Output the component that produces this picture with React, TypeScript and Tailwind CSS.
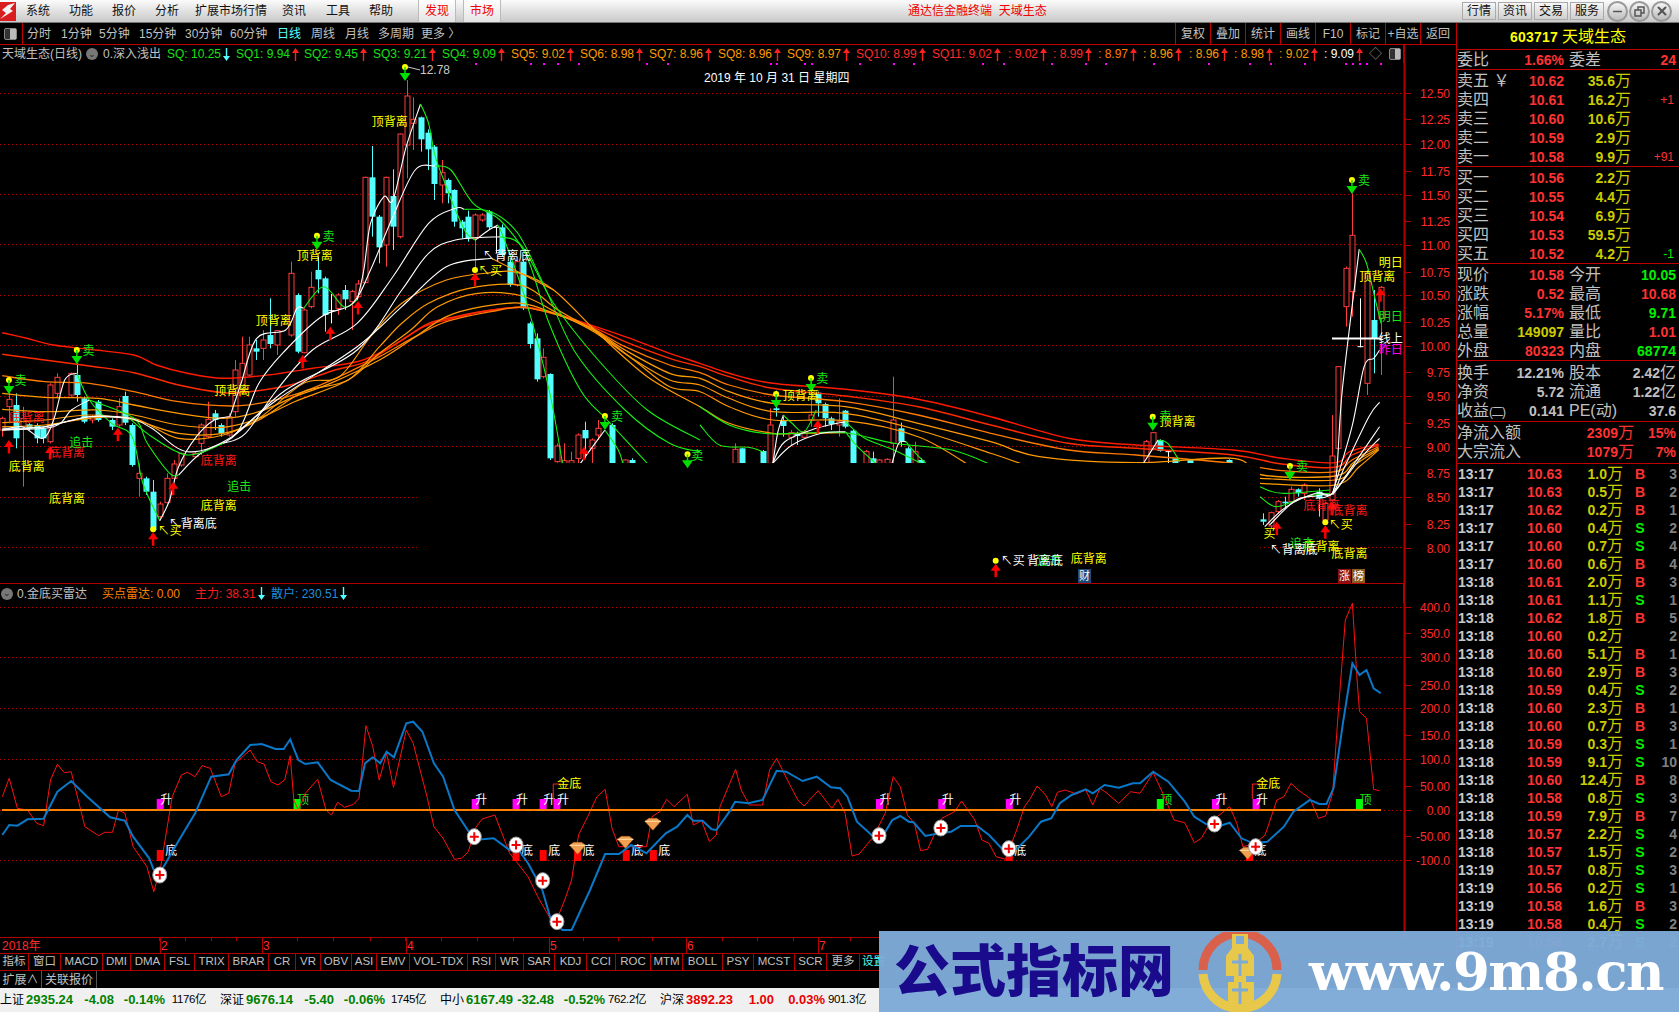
import { Minus, X } from "lucide-react";

// reference crops were read in their own scale, these turn crop numbers into page pixels
const z8 = (p: number[]) => conv(p, 0, 90, 2.24);
const z9 = (p: number[]) => conv(p, 700, 150, 2.063);
const z10 = (p: number[]) => conv(p, 0, 580, 2.178);
const z11 = (p: number[]) => conv(p, 720, 580, 2.119);

function conv(p: number[], ox: number, oy: number, sx: number) {
  const out: [number, number][] = [];
  for (let i = 0; i < p.length; i += 2) out.push([ox + p[i] / sx, oy + p[i + 1] / 3]);
  return out;
}

function smooth(pts: [number, number][]) {
  let d = `M${pts[0][0].toFixed(1)} ${pts[0][1].toFixed(1)}`;
  for (let i = 0; i < pts.length - 1; i++) {
    const p0 = pts[i - 1] || pts[i];
    const p1 = pts[i];
    const p2 = pts[i + 1];
    const p3 = pts[i + 2] || p2;
    const c1x = p1[0] + (p2[0] - p0[0]) / 6;
    const c1y = p1[1] + (p2[1] - p0[1]) / 6;
    const c2x = p2[0] - (p3[0] - p1[0]) / 6;
    const c2y = p2[1] - (p3[1] - p1[1]) / 6;
    d += `C${c1x.toFixed(1)} ${c1y.toFixed(1)} ${c2x.toFixed(1)} ${c2y.toFixed(1)} ${p2[0].toFixed(1)} ${p2[1].toFixed(1)}`;
  }
  return d;
}

const RED = "#ff2a2a";
const ORANGE = "#ff9a00";
const GREEN = "#16f016";
const WHITE = "#ffffff";

// ribbon of moving averages, slow to fast
const ribbon: { c: string; w?: number; pts: [number, number][] }[] = [
  { c: "#ff1a00", w: 1.4, pts: [...z8([5,728,60,745,120,765,200,778,300,795,350,825,420,850,500,865,600,855,700,835,800,815,870,775,950,710,1000,690,1080,665,1170,652,1230,665,1300,695,1400,740,1500,790]), ...z9([0,640,60,670,150,700,300,718,450,748,600,800,760,865,900,885,1100,900,1200,925,1310,938,1340,905,1400,882])] },
  { c: "#ff2a00", w: 1.4, pts: [...z8([5,793,100,810,200,828,300,848,400,885,500,908,560,905,650,885,750,840,820,815,900,750,960,700,1020,680,1100,660,1170,652,1240,670,1310,700,1400,755,1500,805]), ...z9([0,650,60,680,150,715,300,738,450,770,600,825,760,880,900,895,1100,915,1200,942,1310,952,1345,915,1400,885])] },
  { c: "#ff7a00", w: 1.3, pts: [...z8([5,857,100,875,200,880,300,905,400,935,520,948,600,935,680,905,760,860,850,800,930,740,1000,695,1100,665,1170,652,1250,675,1320,710,1400,770,1500,825]), ...z9([0,668,60,705,150,735,300,755,450,795,600,850,760,900,900,915,1100,940,1200,962,1310,965,1345,930,1400,890])] },
  { c: ORANGE, w: 1.3, pts: [...z8([5,910,100,922,220,925,300,945,400,970,500,985,580,965,660,920,740,880,850,810,920,750,1000,680,1080,650,1170,640,1250,675,1330,720,1400,780,1500,850]), ...z9([0,685,60,725,150,760,300,770,450,820,600,875,700,920,900,938,1100,925,1160,975,1310,978,1350,935,1400,895])] },
  { c: ORANGE, w: 1.2, pts: [...z8([5,958,100,965,220,960,300,975,400,1005,500,1012,580,985,660,935,780,870,850,790,920,720,980,650,1070,610,1170,618,1250,670,1330,725,1410,800,1500,870]), ...z9([0,705,60,745,150,785,300,790,450,840,600,910,680,950])] },
  { c: ORANGE, w: 1.2, pts: [...z8([5,998,100,990,200,975,300,990,400,1030,500,1030,580,990,680,905,780,870,850,770,900,700,960,640,1050,595,1170,587,1250,660,1340,730,1420,810,1500,890]), ...z9([0,725,60,770,150,810,300,812,450,860,560,950])] },
  { c: ORANGE, w: 1.2, pts: [...z8([5,1010,100,1005,200,985,300,985,400,1045,500,1035,580,985,680,880,760,860,830,740,900,640,1000,570,1100,548,1160,548,1240,600,1340,730,1450,860,1568,950]), ...z9([60,820,150,850,200,850,300,848])] },
  { c: ORANGE, w: 1.2, pts: z9([1155,985,1310,990,1350,945,1400,898]) },
  { c: ORANGE, w: 1.2, pts: z9([1155,1000,1310,1005,1360,950,1400,900]) },
  // green / white stretches of the faster averages
  { c: WHITE, pts: z8([5,1020,50,1010,95,1045,120,990,145,870,172,850]) },
  { c: GREEN, pts: z8([172,850,200,930,250,1000,296,1040,320,1180,358,1292]) },
  { c: WHITE, pts: z8([358,1292,380,1230,400,1130,440,1040,480,990,515,980]) },
  { c: WHITE, pts: z8([515,980,540,880,575,745,640,720,665,655,680,655]) },
  { c: GREEN, pts: z8([680,655,725,590,770,650,800,630]) },
  { c: WHITE, pts: z8([800,630,815,540,830,400,860,320,880,330,910,170,942,42]) },
  { c: GREEN, pts: z8([942,42,960,100,975,200,1000,290,1020,360,1045,430,1065,450]) },
  { c: WHITE, pts: z8([1065,450,1095,420,1115,405]) },
  { c: GREEN, pts: z8([1115,405,1130,450,1180,640,1230,900,1260,1120]) },
  { c: WHITE, pts: z8([1300,1120,1355,1020]) },
  { c: GREEN, pts: z8([1355,1020,1385,1080,1395,1120]) },
  { c: WHITE, pts: z8([5,1020,120,1010,160,960,200,930]) },
  { c: GREEN, pts: z8([200,930,300,985,330,1060,380,1150,400,1155]) },
  { c: WHITE, pts: z8([400,1155,450,1090,530,1030,580,880,640,780,720,680,790,640,830,540,880,380,930,240,975,228]) },
  { c: GREEN, pts: z8([975,228,1010,240,1060,340,1120,390,1180,500,1230,700,1300,900,1360,990,1450,1120]) },
  { c: WHITE, pts: z8([5,1015,100,1010,200,980,290,985]) },
  { c: GREEN, pts: z8([290,985,340,1040,420,1095,500,1060]) },
  { c: WHITE, pts: z8([500,1060,550,1030,620,900,700,780,800,700,880,560,960,400,1020,355,1040,358]) },
  { c: GREEN, pts: z8([1040,358,1100,365,1160,430,1220,590,1290,790,1400,960,1500,1060,1568,1085]) },
  { c: WHITE, pts: z8([5,1020,100,1010,200,980,290,985,340,1015,420,1085,520,1040,640,900,800,780,900,600,960,490,1020,450,1120,440]) },
  { c: GREEN, pts: [...z8([1120,440,1170,470,1240,640,1340,810,1450,960,1568,1050])] },
  { c: WHITE, pts: z8([520,1040,620,930,800,770,900,650,1000,530,1100,505]) },
  { c: ORANGE, pts: z8([1100,505,1160,545,1240,600]) },
  { c: GREEN, pts: z9([0,770,60,825,130,850,200,850,300,848,400,880,520,900,610,950]) },
  { c: GREEN, pts: z9([0,825,40,885,100,892,130,905]) },
  { c: WHITE, pts: z9([150,945,160,850,172,795]) },
  { c: GREEN, pts: z9([172,795,190,820,215,845,240,780]) },
  { c: WHITE, pts: z9([150,940,190,885,250,850,300,845]) },
  { c: WHITE, pts: z9([150,940,175,875,240,835,300,815]) },
  { c: GREEN, pts: z9([300,845,325,890,370,950]) },
  { c: GREEN, pts: z9([300,815,340,865,400,900,470,950]) },
  { c: WHITE, pts: z9([395,945,410,880,425,875]) },
  { c: GREEN, pts: z9([425,875,445,910,470,945]) },
  { c: WHITE, pts: z9([915,940,945,870]) },
  { c: GREEN, pts: z9([945,870,965,880,990,935]) },
  { c: GREEN, pts: z9([1155,1010,1200,1030,1300,1020]) },
  { c: GREEN, pts: z9([1155,1040,1190,1070,1250,1040,1300,1030]) },
  { c: WHITE, pts: z9([1165,1130,1210,1070,1270,1030,1305,1030,1330,950,1380,800,1402,757]) },
  { c: WHITE, pts: z9([1270,1045,1305,1030,1350,940,1402,830]) },
  { c: WHITE, pts: z9([1305,1035,1360,930,1402,865]) },
  { c: WHITE, pts: z9([1175,1125,1230,1050,1280,1035,1310,1005,1325,720,1360,298]) },
  { c: GREEN, pts: z9([1360,298,1375,340,1390,430,1405,520]) },
  { c: WHITE, pts: z9([1305,1030,1345,830,1370,650,1390,625,1402,600]) },
];

// x, high, body top, body bottom, low, kind: 0 red hollow, 1 cyan filled, 2 white doji
type Candle = [number, number, number, number, number, number];
const candles8: Candle[] = [
  [5,980,985,1020,1040,0],[20,905,928,950,1000,0],[36,910,945,1045,1075,1],[51,950,985,1010,1190,0],[66,1000,1003,1015,1020,1],[82,1000,1005,1045,1060,1],[97,1010,1015,1045,1060,1],
  [113,880,885,1055,1060,0],[128,850,862,910,925,0],[158,848,850,915,920,0],[173,820,855,915,935,1],[189,920,925,995,1000,1],[205,975,980,990,1000,0],[220,930,935,990,995,1],[251,985,990,1010,1020,1],
  [266,925,950,1005,1010,0],[281,905,918,998,1005,1],[296,1000,1005,1125,1130,1],[312,1120,1150,1165,1220,0],[328,1160,1165,1205,1215,1],[343,1170,1205,1320,1325,1],[359,1235,1242,1280,1285,0],
  [374,1150,1165,1238,1240,0],[389,1110,1122,1165,1170,0],[405,1088,1090,1125,1130,0],[436,1085,1090,1100,1105,0],[451,1000,1005,1060,1095,0],[466,935,988,1040,1045,0],[481,960,970,990,1020,1],
  [496,1000,1005,1030,1040,1],[512,970,980,1035,1040,0],[527,810,840,965,980,0],[543,740,820,900,905,0],[558,740,765,855,860,0],[574,750,775,785,810,1],[589,720,750,775,810,0],[604,625,735,762,775,1],
  [620,720,722,765,795,0],[651,515,550,735,740,0],[667,610,615,785,790,1],[680,655,660,788,790,0],[696,545,592,650,655,0],[712,500,540,568,610,1],[727,560,565,675,725,1],[742,612,662,664,700,2],[758,610,615,655,675,0],
  [773,585,600,628,660,1],[788,600,605,635,720,0],[803,570,582,620,625,0],[818,260,262,578,580,0],[834,168,262,380,440,1],[850,375,380,472,520,1],[865,260,262,465,530,0],[881,238,318,410,480,1],
  [895,130,132,440,445,0],[911,-30,18,165,265,0],[926,22,88,100,180,0],[942,80,82,148,185,1],[958,118,128,178,240,1],[973,165,170,282,330,1],[989,210,248,285,340,0],[1003,265,270,310,340,1],
  [1018,298,300,395,410,1],[1034,390,395,415,445,1],[1049,362,380,445,455,1],[1065,370,375,445,540,0],[1080,370,375,390,395,0],[1096,360,365,412,420,1],[1111,410,412,420,490,2],[1125,403,412,495,500,1],
  [1142,510,515,585,590,1],[1157,510,515,585,590,0],[1172,510,515,655,660,1],[1188,695,700,762,775,1],[1203,730,745,868,875,1],[1217,775,802,860,865,0],[1233,850,852,1105,1110,1],[1248,1060,1068,1115,1118,0],
  [1264,1060,1112,1120,1120,0],[1280,1085,1112,1120,1120,0],[1295,1030,1035,1105,1120,0],[1310,995,1020,1045,1105,1],[1325,1045,1050,1075,1120,0],[1340,990,1015,1035,1050,0],[1371,1000,1005,1120,1120,1],[1400,1108,1110,1120,1120,0],[1416,1105,1110,1120,1120,1],
];
const candles9: Candle[] = [
  [72,880,898,940,940,0],[87,893,895,940,940,1],[131,900,903,940,940,1],[145,775,825,940,940,0],[157,722,775,780,800,1],[172,800,810,828,860,1],[187,840,848,862,885,0],[200,845,850,858,885,1],[215,840,845,862,865,0],
  [230,690,795,810,830,0],[243,725,728,760,800,1],[257,758,762,805,830,1],[271,800,805,822,840,1],[286,745,815,825,860,0],[299,780,782,830,835,1],[315,840,842,940,940,1],[343,900,905,940,940,0],[356,905,925,940,940,1],
  [370,928,930,940,940,0],[385,925,928,940,940,0],[399,680,810,880,940,0],[414,818,835,875,890,1],[429,890,895,940,940,1],[443,875,905,940,940,0],[455,925,930,940,940,1],[920,870,875,940,940,0],[935,846,848,895,900,0],
  [950,868,870,903,905,1],[965,900,905,940,940,2],[980,925,925,940,940,1],[1010,928,930,940,940,1],[1092,928,930,940,940,1],
  [1162,1090,1108,1115,1125,1],[1177,1085,1088,1128,1135,0],[1192,1050,1055,1085,1090,0],[1207,1040,1055,1060,1075,1],[1219,1010,1018,1055,1060,0],[1233,1015,1018,1030,1040,1],[1247,1000,1005,1030,1050,0],
  [1277,1015,1025,1045,1100,1],[1290,1055,1060,1110,1115,0],[1304,795,918,1050,1055,0],[1317,648,650,895,900,0],[1332,350,355,470,530,0],[1345,130,256,425,500,0],[1361,445,590,592,592,2],[1375,360,365,700,735,0],[1390,420,510,565,670,1],[1404,408,412,505,675,0],
];

const sells: [number, number][] = [
  ...z8([20,870,172,780,710,437,1355,978,1540,1093]),
  ...z9([157,732,229,684,934,800,1217,948,1345,90]),
  [405, 67],
];
const buys: [number, number, boolean][] = [
  ...z8([20,1050,112,1068,264,1013,388,1175,678,795,740,710,802,633,1308,1070]).map((p) => [p[0], p[1], false] as [number, number, boolean]),
  ...z8([343,1318,1064,540]).map((p) => [p[0], p[1], true] as [number, number, boolean]),
  ...z9([243,810,1190,1115,1303,1055,1404,415]).map((p) => [p[0], p[1], false] as [number, number, boolean]),
  ...z9([610,1232,1290,1117]).map((p) => [p[0], p[1], true] as [number, number, boolean]),
];

const YEL = "#ffff00";
const LBL = "#ff1a1a";
const LGR = "#19e619";
const labels: [string, [number, number], string][] = [
  ["顶背离", z8([873,95])[0], YEL], ["顶背离", z8([705,497])[0], YEL], ["顶背离", z8([613,690])[0], YEL], ["顶背离", z8([520,900])[0], YEL],
  ["底背离", z8([60,983])[0], LBL], ["底背离", z8([150,1087])[0], LBL], ["底背离", z8([490,1110])[0], LBL],
  ["底背离", z8([60,1128])[0], YEL], ["底背离", z8([150,1225])[0], YEL], ["底背离", z8([490,1245])[0], YEL],
  ["追击", z8([182,1057])[0], LGR], ["追击", z8([536,1188])[0], LGR],
  ["卖", z8([46,870])[0], LGR], ["卖", z8([198,780])[0], LGR], ["卖", z8([736,438])[0], LGR], ["卖", z8([1382,978])[0], LGR], ["卖", z8([1562,1095])[0], LGR],
  ["↖背离底", z8([432,1300])[0], WHITE], ["↖背离底", z8([1135,497])[0], WHITE],
  ["↖买", z8([380,1320])[0], YEL], ["↖买", z8([1098,540])[0], YEL],
  ["顶背离", z9([208,737])[0], YEL], ["顶背离", z9([985,815])[0], YEL], ["顶背离", z9([1397,380])[0], YEL],
  ["卖", z9([252,685])[0], LGR], ["卖", z9([1370,92])[0], LGR], ["卖", z9([960,798])[0], LGR], ["卖", z9([1242,948])[0], LGR],
  ["明日", z9([1425,338])[0], YEL], ["明日", z9([1425,500])[0], LGR], ["线上", z9([1425,565])[0], WHITE], ["昨日", z9([1425,597])[0], "#ff00ff"],
  ["底背离", z9([1282,1065])[0], LBL], ["底背离", z9([1340,1080])[0], LBL],
  ["底背离", z9([802,1225])[0], YEL], ["底背离", z9([1340,1210])[0], YEL], ["底背离", z9([1282,1190])[0], YEL],
  ["追击", z9([1242,1180])[0], LGR], ["追击", z9([720,1232])[0], LGR],
  ["买", z9([1175,1150])[0], YEL], ["↖买", z9([1322,1122])[0], YEL], ["↖买", z9([645,1232])[0], WHITE],
  ["↖背离底", z9([1225,1197])[0], WHITE], ["背离底", z9([712,1232])[0], WHITE],
];

const grid1 = [93, 144, 194, 244, 295, 345, 396, 446, 497, 547];
const axis1: [string, number][] = [["12.50",93],["12.25",119],["12.00",144],["11.75",171],["11.50",195],["11.25",221],["11.00",245],["10.75",272],["10.50",295],["10.25",322],["10.00",346],["9.75",372],["9.50",396],["9.25",423],["9.00",447],["8.75",473],["8.50",497],["8.25",524],["8.00",548]];
const grid2 = [607, 657, 708, 759, 810, 860];
const axis2: [string, number][] = [["400.0",607],["350.0",633],["300.0",657],["250.0",685],["200.0",708],["150.0",735],["100.0",759],["50.00",786],["0.00",810],["-50.00",836],["-100.0",860]];

const blue = [
  ...z10([5,765,20,735,38,737,60,718,95,716,125,635,155,603,190,650,240,712,272,722,290,770,325,835,335,870,350,875,390,780,425,700,460,590,498,583,515,540,545,495,570,492,600,507,618,507,632,478,650,540,665,552,692,547,720,600,765,632,782,633,795,550,812,532,828,550,842,515,858,532,885,430,900,425,920,455,945,550,965,590,990,690,1033,780,1075,775,1110,810,1125,800,1150,850,1180,925,1200,1020,1225,1050,1245,1050,1285,930,1318,822,1348,822,1375,795,1408,820,1450,760,1475,740,1497,705,1510,722,1530,722,1550,748,1560,750]),
  ...z11([0,735,20,695,32,665,60,670,90,660,120,572,140,575,175,603,205,590,235,622,255,625,270,650,290,725,325,770,340,780,365,720,382,708,400,725,410,727,435,768,465,760,490,755,510,738,545,738,570,765,610,825,630,805,655,770,680,725,702,715,720,670,745,645,775,628,790,640,815,615,845,623,875,610,890,610,918,575,950,605,985,665,1005,710,1030,732,1060,737,1080,728,1105,775,1130,790,1160,785,1195,740,1215,695,1250,660,1270,672,1285,672,1300,625,1320,430,1340,250,1355,285,1370,270,1385,325,1400,340]),
];
const thinRed = [
  ...z10([5,650,20,595,38,685,60,690,80,730,95,737,110,600,125,553,140,578,155,575,185,740,215,767,228,757,245,757,258,690,272,700,290,800,320,860,335,935,350,860,375,650,395,585,408,577,425,590,440,557,458,565,482,650,498,640,512,550,545,510,560,545,575,552,590,605,605,615,620,600,632,527,640,660,650,690,665,640,692,598,710,690,722,705,735,667,750,682,770,673,782,655,797,437,812,500,826,600,842,520,857,622,885,450,900,490,930,650,945,740,965,775,990,838,1005,835,1020,815,1035,745,1050,717,1078,705,1110,820,1125,845,1150,890,1172,952,1200,1020,1215,1010,1230,960,1245,900,1260,765,1280,710,1300,650,1318,628,1333,745,1348,800,1385,800,1408,800,1420,710,1437,695,1452,658,1468,680,1497,643,1510,735,1528,722,1545,785,1560,765]),
  ...z11([0,680,33,568,45,630,62,675,90,675,105,570,120,535,150,620,165,660,178,678,208,632,237,685,250,658,265,700,280,828,295,822,325,770,350,700,367,590,382,620,397,705,412,730,425,812,440,808,470,715,497,695,512,663,540,720,555,780,570,790,585,830,605,838,630,745,645,680,658,655,672,618,690,645,703,680,715,637,732,630,755,642,775,630,790,675,805,625,820,640,845,670,870,635,890,640,918,578,940,645,962,720,985,728,1005,788,1020,775,1040,725,1080,680,1095,730,1108,800,1135,790,1155,765,1180,660,1195,650,1210,610,1225,630,1250,655,1268,715,1283,708,1298,640,1310,400,1325,120,1340,70,1350,300,1355,395,1370,415,1385,628,1397,632]),
];

const riseX = [...z10([349,0,1035,0,1124,0,1183,0,1213,0]), ...z11([338,0,470,0,613,0,1050,0,1136,0])].map((p) => p[0]);
const topX = [...z10([647,0]), ...z11([933,0,1355,0])].map((p) => p[0]);
const bottomX = [...z10([349,0,1124,0,1183,0,1258,0,1364,0,1423,0]), ...z11([613,0,1122,0])].map((p) => p[0]);
const crosses = [...z10([348,885,1033,770,1124,795,1182,902,1213,1025]), ...z11([337,767,468,744,612,806,1048,732,1135,800])];
const gems = [...z10([1258,805,1362,787,1422,733]), ...z11([1118,820])];
const goldX = [...z10([1205,0]), ...z11([1128,0])].map((p) => p[0]);

const magentaDots = [475,530,543,557,578,646,667,770,776,804,811,859,893,913,982,1003,1051,1085,1105,1153,1208,1249,1270,1304,1345,1352,1359,1366,1380];

function Arrow({ up, color }: { up: boolean; color: string }) {
  return (
    <svg width="7" height="13" viewBox="0 0 7 13" className="shrink-0">
      {up ? <path d="M3.5 0L7 5H4.2V13H2.8V5H0Z" fill={color} /> : <path d="M3.5 13L7 8H4.2V0H2.8V8H0Z" fill={color} />}
    </svg>
  );
}

function TopChart() {
  const wick = { 0: "#ff3c3c", 1: "#54ffff", 2: "#ffffff" } as Record<number, string>;
  const drawCandle = (c: Candle, conv2: (p: number[]) => [number, number][], i: number) => {
    const [[x, hi], [, top], [, bot], [, lo]] = conv2([c[0], c[1], c[0], c[2], c[0], c[3], c[0], c[4]]);
    const cx = Math.round(x) + 0.5;
    const color = wick[c[5]];
    return (
      <g key={i}>
        <line x1={cx} x2={cx} y1={hi} y2={lo} stroke={color} />
        {c[5] === 0 && <rect x={cx - 2.5} y={top} width={5} height={bot - top} fill="#000" stroke={color} />}
        {c[5] === 1 && <rect x={cx - 3} y={top} width={6} height={bot - top} fill={color} />}
        {c[5] === 2 && <line x1={cx - 3} x2={cx + 3} y1={top} y2={top} stroke={color} />}
      </g>
    );
  };
  return (
    <svg width="1456" height="520" viewBox="0 63 1456 520" className="block">
      {grid1.map((y) => (
        <line key={y} x1="0" x2="1404" y1={y + 0.5} y2={y + 0.5} stroke="#c00000" strokeDasharray="1 3" />
      ))}
      {candles8.map((c, i) => drawCandle(c, z8, i))}
      {candles9.map((c, i) => drawCandle(c, z9, i + 500))}
      {ribbon.map((l, i) => (
        <path key={i} d={smooth(l.pts)} fill="none" stroke={l.c} strokeWidth={l.w || 1.1} />
      ))}
      {/* the black patch sitting over the lower middle of the chart */}
      <rect x="417" y="463" width="843" height="88" fill="#000" fillOpacity="0.96" />
      <line x1="1332" x2="1381" y1="338.5" y2="338.5" stroke="#fff" strokeWidth="2" />
      {sells.map(([x, y], i) => (
        <g key={i}>
          <circle cx={x} cy={y} r="3" fill="#ffff00" />
          <line x1={x} x2={x} y1={y} y2={y + 8} stroke="#00e000" strokeWidth="1.5" />
          <path d={`M${x - 5.5} ${y + 6}H${x + 5.5}L${x} ${y + 14}Z`} fill="#00e000" />
        </g>
      ))}
      {buys.map(([x, y, dot], i) => (
        <g key={i}>
          {dot && <circle cx={x} cy={y} r="3" fill="#ffff00" />}
          <path d={`M${x} ${y + (dot ? 2 : 0)}l5 7h-3.8v6.5h-2.4v-6.5h-3.8Z`} transform={`translate(0 ${dot ? 1 : 0})`} fill="#ff0000" />
        </g>
      ))}
      <text x="420" y="74" fontSize="12" fill="#c8c8c8">12.78</text>
      <path d="M408 67L420 70" stroke="#c8c8c8" />
      {labels.map(([t, [x, y], c], i) => (
        <text key={i} x={x} y={y + 4.5} fontSize="12" fill={c} textAnchor="middle">{t}</text>
      ))}
      <g fontSize="11" textAnchor="middle">
        <rect x="1078" y="569" width="13" height="14" fill="#1b4a7a" />
        <text x="1084.5" y="580" fill="#fff">财</text>
        <rect x="1338" y="569" width="13" height="14" fill="#8a1010" />
        <text x="1344.5" y="580" fill="#fff">涨</text>
        <rect x="1352" y="569" width="13" height="14" fill="#8a5a20" />
        <text x="1358.5" y="580" fill="#fff">榜</text>
      </g>
      {magentaDots.map((x) => (
        <rect key={x} x={x} y="63" width="2" height="2" fill="#ff00ff" />
      ))}
      <text x="704" y="82" fontSize="12" fill="#fff">2019 年 10 月 31 日 星期四</text>
      <line x1="1404.5" x2="1404.5" y1="63" y2="583" stroke="#b00000" strokeWidth="2" />
      {axis1.map(([t, y]) => (
        <g key={t}>
          <line x1="1405" x2="1411" y1={y + 0.5} y2={y + 0.5} stroke="#b00000" />
          <text x="1450" y={y + 4.5} fontSize="12" fill={RED} textAnchor="end">{t}</text>
        </g>
      ))}
    </svg>
  );
}

function BottomChart() {
  const pts = (l: [number, number][]) => l.map((p) => `${p[0].toFixed(1)},${p[1].toFixed(1)}`).join(" ");
  return (
    <svg width="1456" height="334" viewBox="0 603 1456 334" className="block">
      {grid2.map((y) => (
        <line key={y} x1="0" x2="1404" y1={y + 0.5} y2={y + 0.5} stroke="#c00000" strokeDasharray="1 3" />
      ))}
      {riseX.map((x) => (
        <g key={x}>
          <rect x={x - 3.5} y="799" width="7" height="11" fill="#ff00ff" />
          <text x={x + 6} y="804" fontSize="12" fill="#fff" textAnchor="middle">升</text>
        </g>
      ))}
      {topX.map((x) => (
        <g key={x}>
          <rect x={x - 3.5} y="799" width="7" height="11" fill="#00ff00" />
          <text x={x + 6} y="804" fontSize="12" fill="#19e619" textAnchor="middle">顶</text>
        </g>
      ))}
      {bottomX.map((x) => (
        <g key={x}>
          <rect x={x - 3.5} y="850" width="7" height="11" fill="#ff0000" />
          <text x={x + 11} y="855" fontSize="12" fill="#fff" textAnchor="middle">底</text>
        </g>
      ))}
      {goldX.map((x) => (
        <g key={x}>
          <path d={`M${x} 799V784H${x + 8}`} fill="none" stroke="#ff2020" />
          <text x={x + 16} y="788" fontSize="12" fill="#ffff00" textAnchor="middle">金底</text>
        </g>
      ))}
      <polyline points={pts(thinRed)} fill="none" stroke="#ff1010" />
      <line x1="2" x2="1381" y1="810" y2="810" stroke="#ff8000" strokeWidth="2" />
      <polyline points={pts(blue)} fill="none" stroke="#0a78c8" strokeWidth="2" />
      {gems.map(([x, y], i) => (
        <g key={i}>
          <path d={`M${x - 8} ${y - 3}L${x - 4} ${y - 6}H${x + 4}L${x + 8} ${y - 3}L${x} ${y + 6}Z`} fill="#f0a050" stroke="#b86018" strokeWidth="0.5" />
          <path d={`M${x - 8} ${y - 3}H${x + 8}`} stroke="#ffe0b0" />
        </g>
      ))}
      {crosses.map(([x, y], i) => (
        <g key={i}>
          <ellipse cx={x} cy={y} rx="7" ry="8" fill="#fff" stroke="#999" />
          <path d={`M${x - 4.5} ${y}H${x + 4.5}M${x} ${y - 4.5}V${y + 4.5}`} stroke="#f00000" strokeWidth="2" />
        </g>
      ))}
      <line x1="1404.5" x2="1404.5" y1="603" y2="937" stroke="#b00000" strokeWidth="2" />
      {axis2.map(([t, y]) => (
        <g key={t}>
          <line x1="1405" x2="1411" y1={y + 0.5} y2={y + 0.5} stroke="#b00000" />
          <text x="1450" y={y + 4.5} fontSize="12" fill={RED} textAnchor="end">{t}</text>
        </g>
      ))}
    </svg>
  );
}

function Logo() {
  return (
    <svg width="16" height="19" viewBox="0 0 16 19" className="shrink-0">
      <rect width="16" height="19" fill="#d81e1e" />
      <path d="M0 17L6 11L2 8L8 3L15 1L10 7L13 9L5 14Z" fill="#f4f4f4" />
    </svg>
  );
}

function Menu() {
  return (
    <div className="flex h-[23px] shrink-0 items-center border-b border-[#777] bg-gradient-to-b from-[#fbfbfb] to-[#c9c9c9] text-[12px] text-[#111]">
      <Logo />
      <div className="ml-[10px] flex items-center">
        <span className="w-[43px]">系统</span>
        <span className="w-[43px]">功能</span>
        <span className="w-[43px]">报价</span>
        <span className="w-[40px]">分析</span>
        <span className="w-[87px]">扩展市场行情</span>
        <span className="w-[44px]">资讯</span>
        <span className="w-[43px]">工具</span>
        <span className="w-[49px]">帮助</span>
      </div>
      <div className="flex h-[22px] w-[38px] items-center justify-center border-x border-[#bbb] bg-gradient-to-b from-[#fff] to-[#e4e4e4] text-[#f00000]">发现</div>
      <div className="ml-[7px] flex h-[22px] w-[38px] items-center justify-center border-x border-[#bbb] bg-gradient-to-b from-[#fff] to-[#e4e4e4] text-[#f00000]">市场</div>
      <div className="ml-[407px] w-[554px] shrink-0 text-[#f00000]">通达信金融终端&nbsp;&nbsp;天域生态</div>
      <div className="flex items-center gap-[2px]">
        {["行情", "资讯", "交易", "服务"].map((t) => (
          <span key={t} className="flex h-[18px] w-[34px] items-center justify-center border border-[#aaa] bg-gradient-to-b from-[#f6f6f6] to-[#cfcfcf]">{t}</span>
        ))}
      </div>
      <div className="ml-[3px] flex items-center gap-[1px]">
        <span className="flex size-[21px] items-center justify-center rounded-full border-2 border-[#999] bg-gradient-to-b from-[#f4f4f4] to-[#bbb] text-[#555]"><Minus size={13} strokeWidth={3} /></span>
        <span className="flex size-[21px] items-center justify-center rounded-full border-2 border-[#999] bg-gradient-to-b from-[#f4f4f4] to-[#bbb]">
          <svg width="11" height="11" viewBox="0 0 11 11" fill="none" stroke="#555" strokeWidth="1.5"><rect x="1" y="4" width="6" height="6" /><path d="M4 4V1H10V7H7" /></svg>
        </span>
        <span className="flex size-[21px] items-center justify-center rounded-full border-2 border-[#999] bg-gradient-to-b from-[#f4f4f4] to-[#bbb] text-[#555]"><X size={14} strokeWidth={3.5} /></span>
      </div>
    </div>
  );
}

const periods: [string, string, string][] = [
  ["分时", "w-[34px]", ""], ["1分钟", "w-[38px]", ""], ["5分钟", "w-[40px]", ""], ["15分钟", "w-[46px]", ""], ["30分钟", "w-[45px]", ""], ["60分钟", "w-[47px]", ""],
  ["日线", "w-[34px]", "text-[#54ffff]"], ["周线", "w-[34px]", ""], ["月线", "w-[33px]", ""], ["多周期", "w-[43px]", ""], ["更多 〉", "w-[40px]", ""],
];

function Toolbar() {
  return (
    <div className="flex h-[22px] shrink-0 items-center border-b border-[#c00000] text-[12px] text-[#c0c0c0]">
      <div className="flex h-full w-[23px] shrink-0 items-center border-r border-[#c00000] pl-[4px]">
        <span className="flex h-[12px] w-[13px] justify-end rounded-[2px] border border-[#888] bg-[#333]"><span className="w-[6px] bg-[#bbb]" /></span>
      </div>
      <div className="ml-[4px] flex items-center">
        {periods.map(([t, w, c]) => (
          <span key={t} className={`${w} ${c} whitespace-nowrap`}>{t}</span>
        ))}
      </div>
      <div className="mr-[1px] ml-auto flex h-full">
        {["复权", "叠加", "统计", "画线", "F10", "标记", "+自选", "返回"].map((t) => (
          <span key={t} className="flex h-full w-[35px] items-center justify-center border-l border-[#c00000]">{t}</span>
        ))}
      </div>
    </div>
  );
}

const sq: [string, string, string][] = [
  ["SQ1: 9.94", "#16e016", "w-[68px]"], ["SQ2: 9.45", "#16e016", "w-[69px]"], ["SQ3: 9.21", "#16e016", "w-[69px]"], ["SQ4: 9.09", "#16e016", "w-[69px]"], ["SQ5: 9.02", "#ff9a00", "w-[69px]"],
  ["SQ6: 8.98", "#ff9a00", "w-[69px]"], ["SQ7: 8.96", "#ff9a00", "w-[69px]"], ["SQ8: 8.96", "#ff9a00", "w-[69px]"], ["SQ9: 8.97", "#ff9a00", "w-[69px]"], ["SQ10: 8.99", "#ff2a2a", "w-[76px]"],
  ["SQ11: 9.02", "#ff2a2a", "w-[76px]"], [": 9.02", "#ff2a2a", "w-[45px]"], [": 8.99", "#ff2a2a", "w-[45px]"], [": 8.97", "#ff7a00", "w-[45px]"], [": 8.96", "#ff9a00", "w-[46px]"], [": 8.96", "#ff9a00", "w-[45px]"],
  [": 8.98", "#ff9a00", "w-[45px]"], [": 9.02", "#ff9a00", "w-[45px]"], [": 9.09", "#ffffff", "w-[45px]"],
];

function PaneHeader() {
  return (
    <div className="flex h-[18px] w-[1405px] shrink-0 items-center border-r-2 border-[#b00000] text-[12px] whitespace-nowrap">
      <span className="ml-[2px] w-[84px] text-[#c0c0c0]">天域生态(日线)</span>
      <span className="flex size-[12px] items-center justify-center rounded-full bg-[#777] text-[9px] leading-none text-[#222]">⌄</span>
      <span className="ml-[5px] w-[64px] text-[#c0c0c0]">0.深入浅出</span>
      <span className="flex w-[69px] items-center gap-[2px] text-[#16e016]">SQ: 10.25<Arrow up={false} color="#54ffff" /></span>
      {sq.map(([t, c, w], i) => (
        <span key={i} className={`flex ${w} items-center gap-[2px]`} style={{ color: c }}>
          {t}
          <Arrow up color="#ff2020" />
        </span>
      ))}
      <span className="text-[13px] text-[#888]">◇</span>
      <span className="ml-[7px] flex h-[12px] w-[12px] justify-end rounded-[2px] border border-[#888] bg-[#333]"><span className="w-[5px] bg-[#bbb]" /></span>
    </div>
  );
}

function Pane2Header() {
  return (
    <div className="flex h-[20px] w-[1405px] shrink-0 items-center border-t border-r-2 border-[#b00000] text-[12px] whitespace-nowrap">
      <span className="ml-[1px] flex size-[12px] items-center justify-center rounded-full bg-[#777] text-[9px] leading-none text-[#222]">⌄</span>
      <span className="ml-[4px] w-[85px] text-[#c0c0c0]">0.金底买雷达</span>
      <span className="w-[93px] text-[#ff8000]">买点雷达: 0.00</span>
      <span className="flex w-[76px] items-center gap-[2px] text-[#ff1a1a]">主力: 38.31<Arrow up={false} color="#54ffff" /></span>
      <span className="flex items-center gap-[2px] text-[#1e8fd8]">散户: 230.51<Arrow up={false} color="#54ffff" /></span>
    </div>
  );
}

const monthTicks = [159, 185, 211, 236, 262, 297, 333, 370, 405, 441, 477, 513, 549, 583, 618, 652, 686, 722, 757, 793, 818, 850];
const months: [string, string][] = [["2018年", "w-[160px]"], ["2", "w-[102px]"], ["3", "w-[144px]"], ["4", "w-[143px]"], ["5", "w-[137px]"], ["6", "w-[132px]"], ["7", "w-[400px]"]];

function DateAxis() {
  return (
    <div className="relative flex h-[16px] shrink-0 border-t border-[#b00000] text-[12px] leading-[16px] text-[#ff2a2a]">
      {months.map(([t, w], i) => (
        <span key={t} className={`${w} ${i ? "border-l border-[#b00000]" : "pl-[2px]"}`}>{t}</span>
      ))}
      <svg width="880" height="3" className="absolute top-0 left-0">
        {monthTicks.map((x) => (
          <line key={x} x1={x + 0.5} x2={x + 0.5} y1="0" y2="3" stroke="#b00000" />
        ))}
      </svg>
    </div>
  );
}

const tabs: [string, string][] = [
  ["指标", "w-[29px]"], ["窗口", "w-[32px]"], ["MACD", "w-[42px]"], ["DMI", "w-[28px]"], ["DMA", "w-[34px]"], ["FSL", "w-[30px]"], ["TRIX", "w-[34px]"], ["BRAR", "w-[40px]"], ["CR", "w-[27px]"], ["VR", "w-[25px]"],
  ["OBV", "w-[31px]"], ["ASI", "w-[25px]"], ["EMV", "w-[33px]"], ["VOL-TDX", "w-[58px]"], ["RSI", "w-[28px]"], ["WR", "w-[28px]"], ["SAR", "w-[31px]"], ["KDJ", "w-[32px]"], ["CCI", "w-[29px]"], ["ROC", "w-[35px]"],
  ["MTM", "w-[32px]"], ["BOLL", "w-[40px]"], ["PSY", "w-[31px]"], ["MCST", "w-[41px]"], ["SCR", "w-[32px]"], ["更多", "w-[33px]"],
];

function Tabs() {
  return (
    <>
      <div className="flex h-[17px] shrink-0 items-center overflow-hidden border-t border-[#b00000] text-[11.5px] text-[#c0c0c0]">
        {tabs.map(([t, w]) => (
          <span key={t} className={`flex h-full ${w} shrink-0 items-center justify-center border-r border-[#b00000] whitespace-nowrap`}>{t}</span>
        ))}
        <span className="ml-[2px] text-[#54ffff]">设置</span>
      </div>
      <div className="flex h-[18px] shrink-0 items-center border-t border-[#b00000] text-[12px] text-[#c0c0c0]">
        <span className="flex h-full w-[42px] items-center justify-center border-r border-[#555]">扩展∧</span>
        <span className="flex h-full w-[55px] items-center justify-center border-r border-[#555]">关联报价</span>
      </div>
    </>
  );
}

const R = "text-[#ff3232]";
const G = "text-[#00f000]";
const Y = "text-[#cccc00]";
const W = "text-[#c0c0c0]";

function Num({ c, children }: { c: string; children: React.ReactNode }) {
  return <span className={`text-[14px] font-bold ${c}`}>{children}</span>;
}

function Wan({ v, u = "万" }: { v: string; u?: string }) {
  return (
    <span className="flex items-baseline justify-end text-[#cccc00]">
      <span className="text-[14px] font-bold">{v}</span>
      <span className="text-[16px]">{u}</span>
    </span>
  );
}

function Level({ name, price, vol, extra, tag }: { name: string; price: string; vol: string; extra?: string; tag?: string }) {
  const c = extra && extra[0] === "-" ? "text-[#00f000]" : "text-[#ff3232]";
  return (
    <div className="flex h-[19px] items-center">
      <div className="flex w-[107px] items-center justify-between">
        <span className={`text-[16px] ${W}`}>{name}{tag}</span>
        <Num c={R}>{price}</Num>
      </div>
      <div className="w-[67px]"><Wan v={vol} /></div>
      <span className={`w-[43px] text-right text-[12px] ${c}`}>{extra}</span>
    </div>
  );
}

function Pair({ a, av, ac, b, bv, bc }: { a: React.ReactNode; av: React.ReactNode; ac?: string; b: string; bv: React.ReactNode; bc?: string }) {
  return (
    <div className="flex h-[19px] items-center">
      <div className="flex w-[107px] items-center justify-between">
        <span className={`text-[16px] whitespace-nowrap ${W}`}>{a}</span>
        {ac ? <Num c={ac}>{av}</Num> : av}
      </div>
      <div className="ml-[5px] flex w-[107px] items-center justify-between">
        <span className={`text-[16px] whitespace-nowrap ${W}`}>{b}</span>
        {bc ? <Num c={bc}>{bv}</Num> : bv}
      </div>
    </div>
  );
}

function Yi({ v }: { v: string }) {
  return (
    <span className={`flex items-baseline ${W}`}>
      <span className="text-[14px] font-bold">{v}</span>
      <span className="text-[16px]">亿</span>
    </span>
  );
}

function Flow({ name, amt, pct }: { name: string; amt: string; pct: string }) {
  return (
    <div className={`flex h-[19px] items-center ${R}`}>
      <span className={`w-[100px] text-[16px] ${W}`}>{name}</span>
      <span className="flex w-[77px] items-baseline justify-end">
        <span className="text-[14px] font-bold">{amt}</span>
        <span className="text-[16px]">万</span>
      </span>
      <span className="w-[42px] text-right text-[14px] font-bold">{pct}</span>
    </div>
  );
}

const trades: [string, string, string, string, string][] = [
  ["13:17","10.63","1.0","B","3"],["13:17","10.63","0.5","B","2"],["13:17","10.62","0.2","B","1"],["13:17","10.60","0.4","S","2"],["13:17","10.60","0.7","S","4"],["13:17","10.60","0.6","B","4"],
  ["13:18","10.61","2.0","B","3"],["13:18","10.61","1.1","S","1"],["13:18","10.62","1.8","B","5"],["13:18","10.60","0.2","","2"],["13:18","10.60","5.1","B","1"],["13:18","10.60","2.9","B","3"],
  ["13:18","10.59","0.4","S","2"],["13:18","10.60","2.3","B","1"],["13:18","10.60","0.7","B","3"],["13:18","10.59","0.3","S","1"],["13:18","10.59","9.1","S","10"],["13:18","10.60","12.4","B","8"],
  ["13:18","10.58","0.8","S","3"],["13:18","10.59","7.9","B","7"],["13:18","10.57","2.2","S","4"],["13:18","10.57","1.5","S","2"],["13:19","10.57","0.8","S","3"],["13:19","10.56","0.2","S","1"],
  ["13:19","10.58","1.6","B","3"],["13:19","10.58","0.4","S","2"],["13:19","10.58","2.7","S","2"],
];

function QuotePanel() {
  return (
    <div className="flex w-[223px] shrink-0 flex-col overflow-hidden border-l border-[#c00000] leading-none">
      <div className="flex h-[27px] shrink-0 items-center justify-center gap-[4px] border-b border-[#c00000] pt-[2px] text-[#ffff00]">
        <span className="text-[14px] font-bold tracking-[0.2px]">603717</span>
        <span className="text-[16px]">天域生态</span>
      </div>
      <div className="h-[20px] shrink-0 border-b border-[#c00000]">
        <Pair a="委比" av="1.66%" ac={R} b="委差" bv="24" bc={R} />
      </div>
      <div className="h-[97px] shrink-0 border-b border-[#c00000] pt-[1px]">
        <Level name="卖五" tag=" ￥" price="10.62" vol="35.6" />
        <Level name="卖四" price="10.61" vol="16.2" extra="+1" />
        <Level name="卖三" price="10.60" vol="10.6" />
        <Level name="卖二" price="10.59" vol="2.9" />
        <Level name="卖一" price="10.58" vol="9.9" extra="+91" />
      </div>
      <div className="h-[97px] shrink-0 border-b border-[#c00000] pt-[1px]">
        <Level name="买一" price="10.56" vol="2.2" />
        <Level name="买二" price="10.55" vol="4.4" />
        <Level name="买三" price="10.54" vol="6.9" />
        <Level name="买四" price="10.53" vol="59.5" />
        <Level name="买五" price="10.52" vol="4.2" extra="-1" />
      </div>
      <div className="h-[97px] shrink-0 border-b border-[#c00000] pt-[1px]">
        <Pair a="现价" av="10.58" ac={R} b="今开" bv="10.05" bc={G} />
        <Pair a="涨跌" av="0.52" ac={R} b="最高" bv="10.68" bc={R} />
        <Pair a="涨幅" av="5.17%" ac={R} b="最低" bv="9.71" bc={G} />
        <Pair a="总量" av="149097" ac={Y} b="量比" bv="1.01" bc={R} />
        <Pair a="外盘" av="80323" ac={R} b="内盘" bv="68774" bc={G} />
      </div>
      <div className="h-[61px] shrink-0 border-b border-[#c00000] pt-[2px]">
        <Pair a="换手" av="12.21%" ac={W} b="股本" bv={<Yi v="2.42" />} />
        <Pair a="净资" av="5.72" ac={W} b="流通" bv={<Yi v="1.22" />} />
        <Pair a={<>收益<span className="text-[12px] tracking-[-1.5px]">(二)</span></>} av="0.141" ac={W} b="PE(动)" bv="37.6" bc={W} />
      </div>
      <div className="h-[42px] shrink-0 border-b border-[#c00000] pt-[1px]">
        <Flow name="净流入额" amt="2309" pct="15%" />
        <Flow name="大宗流入" amt="1079" pct="7%" />
      </div>
      <div className="pl-[1px] pt-[1px]">
        {trades.map(([t, p, v, s, n], i) => (
          <div key={i} className="flex h-[18px] items-center">
            <span className="w-[62px] text-[14px] font-bold text-[#c8c8c8]">{t}</span>
            <span className="w-[42px] text-right text-[14px] font-bold text-[#ff3232]">{p}</span>
            <span className="flex w-[61px] items-baseline justify-end text-[#cccc00]">
              <span className="text-[14px] font-bold">{v}</span>
              <span className="text-[16px]">万</span>
            </span>
            <span className={`w-[34px] text-center text-[14px] font-bold ${s === "S" ? "text-[#00f000]" : "text-[#ff3232]"}`}>{s}</span>
            <span className="w-[20px] text-right text-[14px] font-bold text-[#808080]">{n}</span>
          </div>
        ))}
      </div>
    </div>
  );
}

const indexes: [string, string, string, string, string, string][] = [
  ["上证", "2935.24", "-4.08", "-0.14%", "1176亿", "text-[#008000]"],
  ["深证", "9676.14", "-5.40", "-0.06%", "1745亿", "text-[#008000]"],
  ["中小", "6167.49", "-32.48", "-0.52%", "762.2亿", "text-[#008000]"],
  ["沪深", "3892.23", "1.00", "0.03%", "901.3亿", "text-[#e80000]"],
];

function StatusBar() {
  return (
    <div className="flex h-[24px] shrink-0 items-center bg-[#f0f0f0] text-[11.5px] whitespace-nowrap text-black">
      {indexes.map(([n, a, b, c, d, col]) => (
        <div key={n} className="flex w-[220px] items-center">
          <span className="w-[26px] text-[12px]">{n}</span>
          <span className={`w-[47px] text-right text-[13px] font-bold ${col}`}>{a}</span>
          <span className={`w-[41px] text-right text-[13px] font-bold ${col}`}>{b}</span>
          <span className={`w-[51px] text-right text-[13px] font-bold ${col}`}>{c}</span>
          <span className="w-[41px] text-right tracking-[-0.4px]">{d}</span>
        </div>
      ))}
    </div>
  );
}

function Watermark() {
  return (
    <div className="absolute right-0 bottom-0 flex h-[81px] w-[800px] items-center bg-[#7eaad8]/[0.97]">
      <span className="ml-[15px] w-[304px] shrink-0 text-[56px] leading-none font-black whitespace-nowrap text-[#1a0a8c]">公式指标网</span>
      <svg width="84" height="80" viewBox="0 0 84 80" className="shrink-0">
        <path d="M5 38A37 37 0 0 1 79 38" fill="none" stroke="#d9614c" strokeWidth="9" />
        <path d="M5 42A37 37 0 0 0 36 76" fill="none" stroke="#e8c84a" strokeWidth="9" />
        <path d="M48 76A37 37 0 0 0 79 42" fill="none" stroke="#e8c84a" strokeWidth="9" />
        <path d="M34 2H50V16L56 24V44H48V50H56V70L50 80H34L30 70V50H36V44H28V24L34 16Z" fill="#e8c84a" />
        <rect x="38" y="4" width="8" height="8" fill="#7eaad8" />
        <path d="M34 30H50M42 22V44M34 58H50M42 50V72" stroke="#7eaad8" strokeWidth="3" />
      </svg>
      <span className="ml-[27px] font-['DejaVu_Serif',serif] text-[53px] leading-none font-bold tracking-[-1.5px] whitespace-nowrap text-white">www.9m8.cn</span>
    </div>
  );
}

export default function App() {
  return (
    <div className="relative flex h-[1012px] w-[1679px] flex-col overflow-hidden bg-black font-['Liberation_Sans','Noto_Sans_CJK_SC',sans-serif]">
      <Menu />
      <div className="flex min-h-0 flex-1">
        <div className="flex w-[1456px] shrink-0 flex-col">
          <Toolbar />
          <PaneHeader />
          <TopChart />
          <Pane2Header />
          <BottomChart />
          <DateAxis />
          <Tabs />
        </div>
        <QuotePanel />
      </div>
      <StatusBar />
      <Watermark />
    </div>
  );
}
